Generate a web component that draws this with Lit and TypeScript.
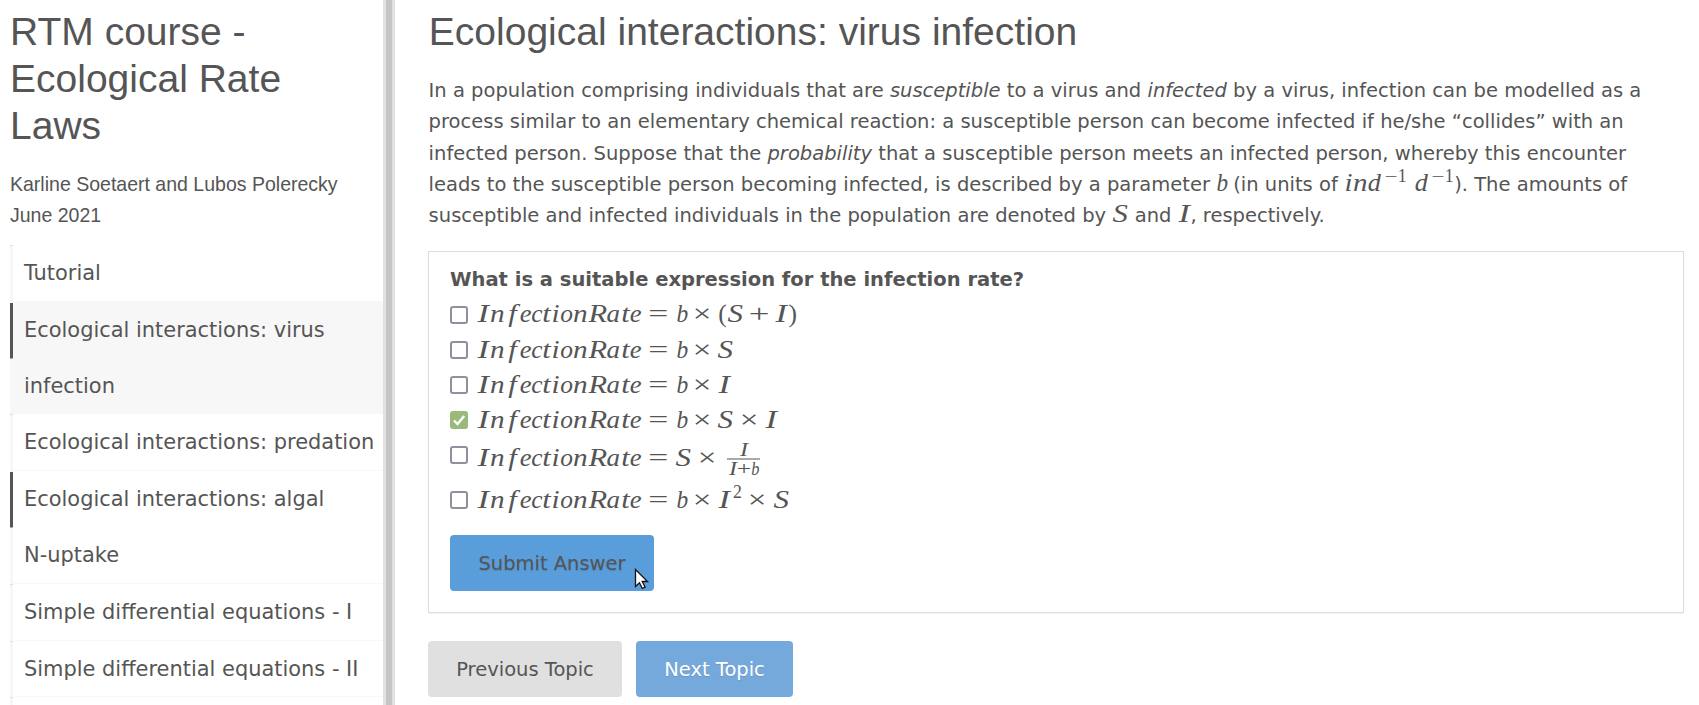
import { LitElement, html, css, svg, nothing } from "lit";
import { customElement, property } from "lit/decorators.js";

// Advance width (em), horizontal glyph stretch, and upright flag for each math glyph.
const GLYPHS: Record<string, [number, number, boolean?]> = {
  I: [0.504, 1.35], n: [0.6, 1.15], f: [0.55, 1.2], e: [0.466, 1.05], c: [0.433, 1],
  t: [0.361, 1.2], i: [0.345, 1.15], o: [0.485, 1], R: [0.759, 1.2], a: [0.529, 1.06],
  b: [0.429, 0.92], d: [0.52, 1.04], S: [0.645, 1.22],
  "=": [1.334, 1.4, true], "×": [1.222, 1.3, true], "+": [1.222, 1.45, true],
  "(": [0.389, 1, true], ")": [0.389, 1, true], "−": [0.778, 1.3, true],
  "1": [0.5, 1, true], "2": [0.5, 1, true], " ": [0.3, 1, true],
};

@customElement("math-run")
class MathRun extends LitElement {
  @property() text = "";
  @property({ type: Boolean }) tight = false;
  static styles = css`
    :host { display: inline-block; white-space: nowrap; font-family: "Liberation Serif", serif; line-height: 1; }
    .g { display: inline-block; text-align: center; }
    .s { display: inline-block; font-style: italic; }
    .up { font-style: normal; }
  `;
  render() {
    return [...this.text].map((ch) => {
      const [w, stretch, upright] = GLYPHS[ch] ?? [0.5, 1];
      const width = this.tight && ch === "+" ? 0.778 : w;
      return html`<span class="g" style="width:${width}em"><span class="s ${upright ? "up" : ""}" style="transform:scaleX(${stretch})">${ch}</span></span>`;
    });
  }
}

@customElement("answer-option")
class AnswerOption extends LitElement {
  @property() expr = "";
  @property() sup = "";
  @property() after = "";
  @property() num = "";
  @property() den = "";
  @property({ type: Boolean }) checked = false;
  static styles = css`
    :host { display: flex; }
    .box { box-sizing: border-box; width: 18px; height: 18px; border: 2px solid #8f8f9d; border-radius: 3px; background: #fff; margin-top: 6px; flex: none; }
    .on { background: #9aba7c; border: 0; }
    .on svg { display: block; }
    .math { margin: 1.4px 0 0 9.3px; font-size: 25.45px; line-height: 30px; white-space: nowrap; height: 30px; display: flex; align-items: baseline; }
    .math.tall { margin-top: 4.5px; }
    .sup { font-size: 17.8px; transform: translateY(-10.5px); margin-left: 2.6px; }
    .frac { display: inline-flex; flex-direction: column; align-items: center; font-size: 17.8px; transform: translateY(-10.5px); margin-left: 4px; }
    .den { border-top: 1px solid #555; padding: 1px 1.3px 0; }
  `;
  render() {
    return html`
      <span class="box ${this.checked ? "on" : ""}">${this.checked
        ? html`<svg width="18" height="18" viewBox="0 0 18 18">${svg`<path d="M4 9.5 7.5 13 14.2 5" fill="none" stroke="#fff" stroke-width="2.4"/>`}</svg>`
        : nothing}</span>
      <span class="math ${this.num ? "tall" : ""}">
        <math-run text="InfectionRate=${this.expr}"></math-run>
        ${this.sup ? html`<math-run class="sup" text=${this.sup}></math-run>` : nothing}
        ${this.after ? html`<math-run text=${this.after}></math-run>` : nothing}
        ${this.num ? html`<span class="frac"><math-run class="num" text=${this.num}></math-run><math-run class="den" tight text=${this.den}></math-run></span>` : nothing}
      </span>`;
  }
}

const TOPICS: { lines: string[]; active?: boolean }[] = [
  { lines: ["Tutorial"] },
  { lines: ["Ecological interactions: virus", "infection"], active: true },
  { lines: ["Ecological interactions: predation"] },
  { lines: ["Ecological interactions: algal", "N-uptake"] },
  { lines: ["Simple differential equations - I"] },
  { lines: ["Simple differential equations - II"] },
  { lines: [""] },
];

@customElement("app-root")
class AppRoot extends LitElement {
  static styles = css`
    :host { display: flex; height: 705px; overflow: hidden; background: #fff; color: #555; font-family: "DejaVu Sans", sans-serif; }
    .side { width: 373px; padding-left: 10px; flex: none; }
    h1, h2, p { margin: 0; font-weight: 400; }
    h1, h2 { font-family: "Liberation Sans", sans-serif; font-size: 39.02px; line-height: 47px; }
    h1 { padding-top: 8px; }
    .authors { font-family: "Liberation Sans", sans-serif; font-size: 19.52px; line-height: 31px; margin-top: 19.6px; height: 76.4px; }
    .topic { display: flex; font-size: 20.93px; }
    .gutter { width: 3px; display: flex; flex-direction: column; }
    .seg { flex: 1; background: #f7f7f7; border-top: 1px solid #ddd; }
    .seg.dark { background: #555; border-top-color: #f7f7f7; }
    .seg.after { border-top-color: #aaa; }
    .lines { flex: 1; padding-left: 11px; line-height: 56.8px; border-bottom: 1px solid #f7f7f7; }
    .line { height: 55.8px; white-space: nowrap; }
    .active .lines { background: #f7f7f7; }
    .handle { box-sizing: border-box; width: 12px; background: #c4c5c4; border: solid #e0e1e0; border-width: 0 3px; flex: none; }
    .main { flex: 1; padding: 8px 15px 0 33px; }
    h2 { padding-left: 0.8px; }
    .intro { font-size: 19.53px; line-height: 31.2px; margin-top: 20.3px; padding-left: 0.6px; white-space: nowrap; height: 156px; }
    .row { height: 31.2px; }
    .intro math-run { font-size: 25.2px; }
    .intro .sup { font-size: 17.8px; transform: translateY(-9.5px); }
    .intro .first { margin: 0 0.6px 0 3px; }
    .quiz { box-sizing: border-box; height: 362px; margin-top: 20.2px; border: 1px solid #ddd; box-shadow: 0 1px 2px rgba(0,0,0,.05); padding: 12px 21px 0; }
    .q { font-size: 19.52px; font-weight: 700; line-height: 31.2px; }
    .opts { margin-top: 4px; display: grid; grid-template-rows: 35.5px 35px 35px 35px 45px 44px; height: 235px; }
    .btn { box-sizing: border-box; display: inline-flex; align-items: center; justify-content: center; height: 56px; border-radius: 4px; font-size: 19.5px; }
    .submit { width: 204px; padding-top: 1px; background: #5a9ddb; color: #555; position: relative; text-shadow: 0 1px 1px rgba(0,0,0,.15); }
    .cursor { position: absolute; left: 184px; top: 33px; }
    .nav { display: flex; gap: 14px; margin-top: 28px; }
    .prev { width: 194px; background: #e0e0e0; }
    .next { width: 157px; background: #76a9db; color: #fff; text-shadow: 0 1px 1px rgba(0,0,0,.12); }
  `;
  render() {
    return html`
      <aside class="side">
        <h1>RTM course -<br>Ecological Rate<br>Laws</h1>
        <p class="authors">Karline Soetaert and Lubos Polerecky<br>June 2021</p>
        <nav>
          ${TOPICS.map((t) => html`<div class="topic ${t.active ? "active" : ""}">
            <div class="gutter">${t.lines.map((_, i) => html`<span class="seg ${t.lines.length > 1 && i === 0 ? "dark" : i > 0 ? "after" : ""}"></span>`)}</div>
            <div class="lines">${t.lines.map((l) => html`<div class="line">${l}</div>`)}</div>
          </div>`)}
        </nav>
      </aside>
      <div class="handle"></div>
      <main class="main">
        <h2>Ecological interactions: virus infection</h2>
        <div class="intro">
          <div class="row">In a population comprising individuals that are <em>susceptible</em> to a virus and <em>infected</em> by a virus, infection can be modelled as a</div>
          <div class="row">process similar to an elementary chemical reaction: a susceptible person can become infected if he/she “collides” with an</div>
          <div class="row">infected person. Suppose that the <em>probability</em> that a susceptible person meets an infected person, whereby this encounter</div>
          <div class="row">leads to the susceptible person becoming infected, is described by a parameter <math-run text="b"></math-run> (in units of <math-run text="ind"></math-run><math-run class="sup first" text="−1"></math-run><math-run text=" d"></math-run><math-run class="sup first" text="−1"></math-run>). The amounts of</div>
          <div class="row">susceptible and infected individuals in the population are denoted by <math-run text="S"></math-run> and <math-run text="I"></math-run>, respectively.</div>
        </div>
        <section class="quiz">
          <div class="q">What is a suitable expression for the infection rate?</div>
          <div class="opts">
            <answer-option expr="b×(S+I)"></answer-option>
            <answer-option expr="b×S"></answer-option>
            <answer-option expr="b×I"></answer-option>
            <answer-option checked expr="b×S×I"></answer-option>
            <answer-option expr="S×" num="I" den="I+b"></answer-option>
            <answer-option expr="b×I" sup="2" after="×S"></answer-option>
          </div>
          <div class="btn submit">Submit Answer
            <svg class="cursor" width="16" height="23" viewBox="0 0 16 23"><path d="M1.5 1.5v17l4-3.7 2.8 5.7 2.8-1.3-2.8-5.7h5.2z" fill="#fff" stroke="#111" stroke-width="1.3"/></svg>
          </div>
        </section>
        <div class="nav"><div class="btn prev">Previous Topic</div><div class="btn next">Next Topic</div></div>
      </main>`;
  }
}
